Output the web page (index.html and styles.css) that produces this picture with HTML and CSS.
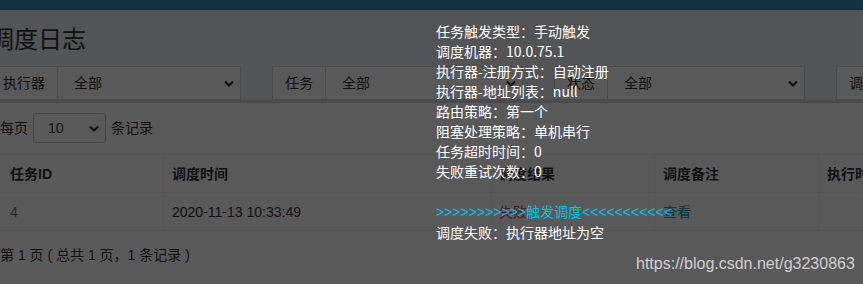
FILE: index.html
```html
<!DOCTYPE html>
<html lang="zh-CN">
<head>
<meta charset="utf-8">
<title>调度日志</title>
<link rel="stylesheet" href="styles.css">
</head>
<body>
<div class="topbar"></div>
<div class="content">
  <h1 class="page-title">调度日志</h1>
  <div class="filters">
    <div class="input-group">
      <span class="addon">执行器</span>
      <div class="select"><span>全部</span><svg class="chev" width="10" height="7" viewBox="0 0 10 7"><polyline points="1,1.5 5,5.5 9,1.5" fill="none" stroke="#333" stroke-width="2.2"/></svg></div>
    </div>
    <div class="input-group">
      <span class="addon">任务</span>
      <div class="select"><span>全部</span><svg class="chev" width="10" height="7" viewBox="0 0 10 7"><polyline points="1,1.5 5,5.5 9,1.5" fill="none" stroke="#333" stroke-width="2.2"/></svg></div>
    </div>
    <div class="input-group">
      <span class="addon">状态</span>
      <div class="select"><span>全部</span><svg class="chev" width="10" height="7" viewBox="0 0 10 7"><polyline points="1,1.5 5,5.5 9,1.5" fill="none" stroke="#333" stroke-width="2.2"/></svg></div>
    </div>
    <div class="input-group">
      <span class="addon">调度时间</span>
      <div class="select"><span></span></div>
    </div>
  </div>
  <div class="box">
    <div class="length">
      <span>每页</span>
      <div class="select small"><span>10</span><svg class="chev" width="10" height="7" viewBox="0 0 10 7"><polyline points="1,1.5 5,5.5 9,1.5" fill="none" stroke="#333" stroke-width="2.2"/></svg></div>
      <span>条记录</span>
    </div>
    <table class="log-table">
      <thead>
        <tr>
          <th class="c1">任务ID</th>
          <th class="c2">调度时间</th>
          <th class="c3">调度结果</th>
          <th class="c4">调度备注</th>
          <th class="c5">执行时间</th>
        </tr>
      </thead>
      <tbody>
        <tr>
          <td class="c1"><a class="link">4</a></td>
          <td class="c2">2020-11-13 10:33:49</td>
          <td class="c3"><span class="fail">失败</span></td>
          <td class="c4"><a class="link">查看</a></td>
          <td class="c5"></td>
        </tr>
      </tbody>
    </table>
    <div class="info">第 1 页 ( 总共 1 页，1 条记录 )</div>
  </div>
</div>
<div class="backdrop"></div>
<div class="tip">任务触发类型：手动触发<br>调度机器：10.0.75.1<br>执行器-注册方式：自动注册<br>执行器-地址列表：null<br>路由策略：第一个<br>阻塞处理策略：单机串行<br>任务超时时间：0<br>失败重试次数：0<br><br><span class="trigger">&gt;&gt;&gt;&gt;&gt;&gt;&gt;&gt;&gt;&gt;&gt;触发调度&lt;&lt;&lt;&lt;&lt;&lt;&lt;&lt;&lt;&lt;&lt;</span><br>调度失败：执行器地址为空</div>
<div class="watermark">https://blog.csdn.net/g3230863</div>
</body>
</html>
```
FILE: styles.css
```css
html, body {
  margin: 0;
  padding: 0;
}
body {
  width: 863px;
  height: 284px;
  overflow: hidden;
  position: relative;
  background: #ecf0f5;
  color: #333;
  font-family: "Liberation Sans", "Noto Sans CJK SC", sans-serif;
  font-size: 14px;
  line-height: 20px;
}
.topbar {
  height: 10px;
  background: #3c8dbc;
}
.content {
  margin-left: -10px;
}
.page-title {
  margin: 16px 0 0 0;
  font-size: 24px;
  line-height: 24px;
  font-weight: normal;
  font-family: "Noto Sans CJK SC", sans-serif;
  color: #333;
}
.filters {
  margin-top: 16px;
  display: grid;
  grid-template-columns: repeat(4, 251px);
  column-gap: 31px;
}
.input-group {
  display: flex;
  height: 34px;
}
.addon {
  display: flex;
  align-items: center;
  padding: 0 12px;
  border: 1px solid #d2d6de;
  border-right: none;
  background: #fff;
  white-space: nowrap;
}
.select {
  flex: 1;
  display: flex;
  align-items: center;
  justify-content: space-between;
  padding: 0 6px 0 16px;
  border: 1px solid #d2d6de;
  background: #fff;
}
.chev {
  display: block;
}
.box {
  margin-top: 0;
  border-top: 3px solid #d2d6de;
  background: #fff;
  padding: 10px 0 30px 10px;
}
.length {
  display: flex;
  align-items: center;
  gap: 5px;
}
.select.small {
  flex: none;
  width: 73px;
  height: 30px;
  box-sizing: border-box;
  padding: 0 6px 0 14px;
  border-color: #ccc;
  border-radius: 3px;
}
.log-table {
  margin-top: 11px;
  border-collapse: separate;
  border-spacing: 0;
  table-layout: fixed;
  width: 1018px;
}
.log-table th,
.log-table td {
  box-sizing: border-box;
  height: 38px;
  padding: 0 8px;
  text-align: left;
  border-top: 1px solid #f4f4f4;
  border-left: 1px solid #f4f4f4;
  white-space: nowrap;
}
.log-table th {
  font-weight: bold;
  font-family: "Liberation Sans", "Noto Sans CJK SC", sans-serif;
}
.log-table tbody td {
  border-bottom: 1px solid #f4f4f4;
  height: 39px;
}
.log-table .c1 {
  width: 163px;
  border-left: none;
  padding-left: 10px;
}
.log-table .c2 { width: 327px; }
.log-table .c3 { width: 164px; }
.log-table .c4 { width: 164px; }
.log-table .c5 { width: 200px; }
.link {
  color: #3c8dbc;
  text-decoration: none;
}
.fail {
  color: #dd4b39;
}
.info {
  margin-top: 14px;
  margin-left: -10px;
  padding-left: 10px;
}
.backdrop {
  position: absolute;
  inset: 0;
  background: rgba(0, 0, 0, 0.65);
}
.tip {
  position: absolute;
  left: 436px;
  top: 21px;
  color: #fff;
  font-family: "Noto Sans CJK SC", sans-serif;
  font-size: 14px;
  line-height: 20px;
  white-space: nowrap;
}
.trigger {
  color: #00c0ef;
  font-family: "Liberation Sans", "Noto Sans CJK SC", sans-serif;
}
.watermark {
  position: absolute;
  left: 636px;
  top: 254px;
  color: rgba(255, 255, 255, 0.72);
  font-family: "Liberation Sans", sans-serif;
  font-size: 16px;
  line-height: 20px;
}
```
